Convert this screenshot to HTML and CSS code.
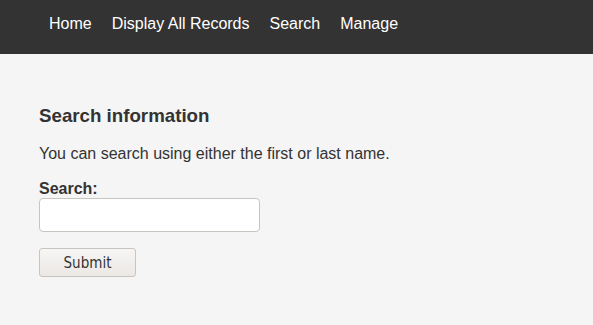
FILE: index.html
```html
<!DOCTYPE html>
<html lang="en">
<head>
  <meta charset="UTF-8">
  <title>Search</title>
  <link rel="stylesheet" href="styles.css">
</head>
<body>
  <nav class="topnav">
    <a href="#">Home</a>
    <a href="#">Display All Records</a>
    <a href="#">Search</a>
    <a href="#">Manage</a>
  </nav>
  <div class="content">
    <h3>Search information</h3>
    <p>You can search using either the first or last name.</p>
    <form class="search-form">
      <label for="term">Search:</label>
      <input type="text" id="term" name="term">
      <button type="submit">Submit</button>
    </form>
  </div>
</body>
</html>
```

FILE: styles.css
```css
body {
  margin: 0;
  background: #f5f5f5;
  font-family: "Liberation Sans", Arial, sans-serif;
  color: #333;
}

.topnav {
  display: flex;
  align-items: center;
  height: 48px;
  padding: 0 39px 6px;
  background: #333;
}

.topnav a {
  padding: 0 10px;
  color: #fff;
  font-size: 16px;
  text-decoration: none;
}

.content {
  padding: 51px 39px;
}

h3 {
  margin: 0 0 19px;
  font-size: 1.17em;
  line-height: 21px;
}

p {
  margin: 0 0 17px;
  font-size: 16px;
}

.search-form label {
  display: block;
  font-weight: bold;
  font-size: 16px;
}

.search-form input {
  display: block;
  width: 221px;
  height: 34px;
  box-sizing: border-box;
  margin: 0 0 16px;
  border: 1px solid #c8c5c0;
  border-radius: 4px;
  background: #fff;
}

.search-form button {
  width: 97px;
  height: 29px;
  font-family: "DejaVu Sans Condensed", "DejaVu Sans", sans-serif;
  font-stretch: condensed;
  font-size: 15px;
  color: #333;
  border: 1px solid #c8c5c0;
  border-radius: 3px;
  background: linear-gradient(#f7f6f5, #ebe8e5);
}
```
